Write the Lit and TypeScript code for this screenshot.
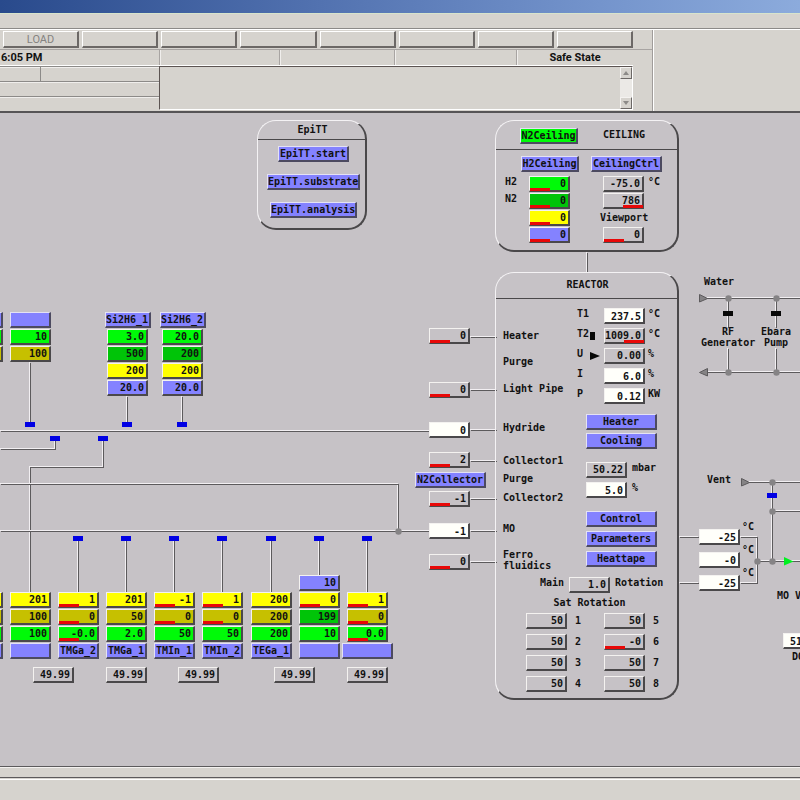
import { LitElement, html, svg, css, nothing } from "lit";
import { customElement, property } from "lit/decorators.js";
import { classMap } from "lit/directives/class-map.js";
import { styleMap } from "lit/directives/style-map.js";

/* Diagram coordinates are screen coordinates; the header takes the first rows. */
const TOP = 113;
const at = (x: number, y: number) => styleMap({ left: `${x}px`, top: `${y - TOP}px` });

type Alarm = "" | "low" | "high";
type Cell = [color: string, value: string, alarm?: Alarm];

interface Column {
  x: number;
  y: number;
  cells: Cell[];
  name: string;
  nameFirst?: boolean;
  wide?: boolean;
}

const upper: Column[] = [
  { x: -38, y: 312, name: "", nameFirst: true, cells: [["green", ""], ["olive", ""]] },
  { x: 10, y: 312, name: "", nameFirst: true, cells: [["green", "10"], ["olive", "100"]] },
  { x: 107, y: 312, name: "Si2H6_1", nameFirst: true, wide: true,
    cells: [["green", "3.0"], ["forest", "500"], ["yellow", "200"], ["violet", "20.0"]] },
  { x: 162, y: 312, name: "Si2H6_2", nameFirst: true, wide: true,
    cells: [["green", "20.0"], ["forest", "200"], ["yellow", "200"], ["violet", "20.0"]] },
];

const lower: Column[] = [
  { x: -38, y: 592, name: "", cells: [["yellow", ""], ["olive", ""], ["green", ""]] },
  { x: 10, y: 592, name: "", cells: [["yellow", "201"], ["olive", "100"], ["green", "100"]] },
  { x: 58, y: 592, name: "TMGa_2", cells: [["yellow", "1", "low"], ["olive", "0", "low"], ["green", "-0.0", "low"]] },
  { x: 106, y: 592, name: "TMGa_1", cells: [["yellow", "201"], ["olive", "50"], ["green", "2.0"]] },
  { x: 154, y: 592, name: "TMIn_1", cells: [["yellow", "-1", "low"], ["olive", "0", "low"], ["green", "50"]] },
  { x: 202, y: 592, name: "TMIn_2", cells: [["yellow", "1", "low"], ["olive", "0", "low"], ["green", "50"]] },
  { x: 251, y: 592, name: "TEGa_1", cells: [["yellow", "200"], ["olive", "200"], ["green", "200"]] },
  { x: 299, y: 575, name: "", cells: [["violet", "10"], ["yellow", "0", "low"], ["forest", "199"], ["green", "10"]] },
  { x: 347, y: 592, name: "", wide: true, cells: [["yellow", "1", "low"], ["olive", "0", "low"], ["green", "0.0", "low"]] },
];

const bathTemps = [33, 106, 178, 274, 347];

/* Gas inlets to the left of the reactor. */
const inlets: { y: number; value: string; alarm?: Alarm; set?: boolean; wire: number }[] = [
  { y: 328, value: "0", alarm: "low", wire: 337 },
  { y: 382, value: "0", alarm: "low", wire: 390 },
  { y: 422, value: "0", set: true, wire: 430 },
  { y: 452, value: "2", alarm: "low", wire: 461 },
  { y: 491, value: "-1", alarm: "low", wire: 499 },
  { y: 523, value: "-1", set: true, wire: 531 },
  { y: 554, value: "0", alarm: "low", wire: 562 },
];

const ports: [text: string, y: number][] = [
  ["Heater", 330],
  ["Purge", 356],
  ["Light Pipe", 383],
  ["Hydride", 422],
  ["Collector1", 455],
  ["Purge", 473],
  ["Collector2", 492],
  ["MO", 523],
  ["Ferro\nfluidics", 549],
];

const labels: [text: string, x: number, y: number][] = [
  ["Water", 704, 276],
  ["RF\nGenerator", 701, 326],
  ["Ebara\nPump", 761, 326],
  ["Vent", 707, 474],
  ["°C", 742, 521],
  ["°C", 742, 544],
  ["°C", 742, 567],
  ["MO V", 777, 590],
  ["DO", 792, 651],
];

const wires = [
  "M0 431H429",
  "M30 362V424",
  "M127 396V424",
  "M182 396V424",
  "M0 449H55V440",
  "M103 440V467H30V592",
  "M0 484H398V531",
  "M0 531H429",
  "M78 540V592",
  "M126 540V592",
  "M174 540V592",
  "M222 540V592",
  "M271 540V592",
  "M319 540V575",
  "M367 540V592",
  "M587 252V272",
  "M706 298H2000",
  "M728 298V327",
  "M776 298V327",
  "M728 348V372",
  "M776 348V372",
  "M706 372H2000",
  "M748 482H2000",
  "M772 482V561",
  "M772 511H2000",
  "M679 537H698",
  "M679 583H698",
  "M740 537H757V583H740",
  "M757 561H2000",
  ...inlets.map((i) => `M470 ${i.wire}H496`),
];

const valves: [x: number, y: number][] = [
  [30, 425], [127, 425], [182, 425], [55, 439], [103, 439],
  [78, 539], [126, 539], [174, 539], [222, 539], [271, 539], [319, 539], [367, 539],
  [772, 496],
];

const joints: [x: number, y: number][] = [
  [398, 531], [728, 298], [776, 298], [728, 372], [776, 372],
  [772, 482], [772, 511], [772, 561], [757, 561],
];

@customElement("value-cell")
class ValueCell extends LitElement {
  @property() value = "";
  @property() color = "plain";
  @property() alarm: Alarm = "";
  @property({ type: Boolean }) editable = false;
  @property() name = "Value";

  static styles = css`
    :host { display: block; width: 41px; height: 16px; position: relative; }
    .cell {
      display: block; box-sizing: border-box; width: 100%; height: 16px; margin: 0;
      padding: 1px 2px 0 0; border: 1px solid; border-radius: 0;
      border-color: #f4f2f0 #4a484a #4a484a #f4f2f0; border-right-width: 2px;
      border-bottom-width: 2px;
      font: bold 10px/12px "DejaVu Sans Mono", "Liberation Mono", monospace;
      color: #111; text-align: right; white-space: nowrap; outline: none;
    }
    .plain { background: #c6c2c6; }
    .white { background: #fffffa; }
    .green { background: #00fa08; }
    .forest { background: #00c408; }
    .yellow { background: #ffff00; }
    .olive { background: #c6c000; }
    .violet { background: #8482ff; }
    .bar { position: absolute; left: 1px; bottom: 1px; width: 20px; height: 3px; background: #e80808; }
    .bar.high { left: auto; right: 1px; }
  `;

  render() {
    const cls = classMap({ cell: true, [this.editable ? "white" : this.color]: true });
    return html`
      ${this.editable
        ? html`<input class=${cls} aria-label=${this.name} .value=${this.value} />`
        : html`<output class=${cls} aria-label=${this.name}>${this.value}</output>`}
      ${this.alarm ? html`<span class=${classMap({ bar: true, high: this.alarm === "high" })}></span>` : nothing}
    `;
  }
}

@customElement("app-root")
class AppRoot extends LitElement {
  static styles = css`
    :host {
      display: flex; flex-direction: column; min-height: 100vh; overflow: hidden;
      background: #d6d3ce; color: #111;
      font: bold 10px/11px "DejaVu Sans Mono", "Liberation Mono", monospace;
    }
    .title { height: 13px; background: linear-gradient(90deg, #294a8c, #5272b0 40%, #7494cc 75%, #8cabdc); }
    .menu { height: 16px; border-top: 1px solid #d8e4cc; border-bottom: 1px solid #8c8a88; box-sizing: border-box; }
    .head { display: flex; height: 84px; border-top: 1px solid #fff; box-sizing: border-box; border-bottom: 2px solid #565456; font: bold 11px/14px Roboto, "Liberation Sans", sans-serif; }
    .left { flex: 1; min-width: 0; border-right: 1px solid #a09c9a; display: flex; flex-direction: column; }
    .side { width: 147px; border-left: 1px solid #fff; box-sizing: border-box; }
    .tools { display: flex; gap: 3px; padding: 1px 19px 1px 3px; height: 20px; box-sizing: border-box; border-bottom: 1px solid #a8a4a2; }
    .tools button {
      flex: 1; min-width: 0; padding: 0; border: 1px solid; border-color: #fff #6c6866 #6c6866 #fff;
      border-right-width: 2px; border-bottom-width: 2px; background: #d6d3ce; color: #848280;
      font: 11px/13px Roboto, "Liberation Sans", sans-serif; height: 17px;
    }
    .status { display: flex; height: 15px; line-height: 15px; margin-right: 19px; border-bottom: 1px solid #fff; }
    .status div { box-sizing: border-box; border-left: 1px solid #a8a4a2; box-shadow: inset 1px 0 #f0eeec; }
    .status .time { width: 159px; padding-left: 1px; border: 0; box-shadow: none; }
    .status .s1 { width: 120px; }
    .status .s2 { width: 115px; }
    .status .s3 { width: 122px; }
    .status .s4 { flex: 1; text-align: center; }
    .log { display: flex; flex: 1; margin-right: 19px; }
    .rows { width: 159px; display: flex; flex-direction: column; }
    .rows div { flex: 1; border-top: 1px solid #8c8a88; box-shadow: inset 0 1px #f0eeec; }
    .rows .split { display: flex; }
    .rows .split span { width: 40px; border-right: 1px solid #8c8a88; }
    .message { flex: 1; display: flex; box-sizing: border-box; height: 44px; border: 1px solid; border-color: #5c5452 #fff #fff #5c5452; }
    .message textarea { flex: 1; border: 0; padding: 0; margin: 0; resize: none; background: #d6d3ce; outline: none; overflow: hidden; }
    .scroll { width: 12px; display: flex; flex-direction: column; justify-content: space-between; background: #ebe9e6; }
    .scroll button { width: 12px; height: 12px; padding: 0; border: 1px solid; border-color: #f4f2f0 #6c6866 #6c6866 #f4f2f0; background: #d6d3ce; display: flex; align-items: center; justify-content: center; }
    .scroll path { fill: #8c8a88; }

    .canvas { position: relative; flex: 1; min-height: 653px; overflow: hidden; background: #c6c2c6; }
    .wiring { position: absolute; inset: 0; width: 100%; height: 100%; }
    .lit { fill: none; stroke: #f2eff2; stroke-width: 1; }
    .dark { fill: none; stroke: #5c5a5c; stroke-width: 1; }
    .joint { fill: #858385; }
    .arrow { fill: #858385; stroke: #5c5a5c; stroke-width: 1; }
    .go { fill: #00f020; }
    .ink { fill: #080808; }
    .valve { fill: #0000e4; }
    .node { position: absolute; }
    .text { position: absolute; white-space: pre; }
    .center { text-align: center; }
    .stack { position: absolute; display: flex; flex-direction: column; align-items: center; width: 41px; gap: 1px; }

    .tag {
      box-sizing: border-box; height: 16px; margin: 0; padding: 0; border: 1px solid;
      border-color: #e4e2f4 #4c4a60 #4c4a60 #e4e2f4; border-right-width: 2px; border-bottom-width: 2px;
      background: #8482ff; color: #111; font: bold 10px/12px "DejaVu Sans Mono", "Liberation Mono", monospace;
      white-space: nowrap; width: 41px; flex: none;
    }
    .tag.on { background: #00fa08; }
    .tag.w46 { width: 46px; }
    .tag.w51 { width: 51px; }
    .tag.w58 { width: 58px; }
    .tag.w70 { width: 71px; }
    .tag.w87 { width: 87px; }
    .tag.w93 { width: 93px; }

    .panel {
      position: absolute; box-sizing: border-box; border: 1px solid; border-radius: 19px;
      border-color: #f4f2f4 #4a484a #4a484a #f4f2f4; border-right-width: 2px; border-bottom-width: 2px;
      width: 184px;
    }
    .panel header { border-bottom: 1px solid #4a484a; display: flex; justify-content: center; box-sizing: border-box; }
    .epi { width: 110px; height: 110px; }
    .epi header { height: 19px; padding: 3px 0 0 2px; }
    .epi .items { display: flex; flex-direction: column; align-items: center; gap: 12px; padding: 6px 0 0 4px; }
    .ceiling { height: 132px; }
    .ceiling header { height: 29px; padding: 7px 0 0 24px; justify-content: flex-start; gap: 25px; line-height: 14px; }
    .ceiling .pair { display: flex; gap: 12px; padding: 6px 0 4px 25px; }
    .ceiling .readings { display: grid; grid-template-columns: 24px 41px 33px 41px 24px; grid-auto-rows: 16px; gap: 1px 0; padding-left: 9px; }
    .ceiling .unit { grid-column: 5; padding-left: 4px; }
    .ceiling .c2 { grid-column: 2; }
    .ceiling .c4 { grid-column: 4; }
    .ceiling .view { grid-column: 3 / 6; padding: 2px 0 0 30px; }
    .reactor { height: 428px; }
    .reactor header { height: 26px; padding: 6px 0 0 2px; }
    .controls { display: flex; flex-direction: column; padding-left: 81px; }
    .heat { display: grid; grid-template-columns: 13px 14px 41px 30px; row-gap: 4px; grid-auto-rows: 16px; padding-top: 9px; }
    .heat .unit { padding-left: 3px; }
    .heat svg { margin-top: 3px; }
    .group { display: flex; flex-direction: column; padding-left: 9px; gap: 4px; }
    .g1 { padding-top: 10px; gap: 3px; }
    .g2 { padding-top: 13px; }
    .g3 { padding-top: 13px; }
    .reading { display: flex; gap: 5px; }
    .rotation { display: flex; gap: 5px; padding: 10px 0 0 44px; }
    .sat { text-align: center; padding: 4px 0 5px 6px; }
    .sats { display: grid; grid-template-columns: 41px 37px 41px 20px; grid-auto-rows: 16px; gap: 5px 0; padding-left: 30px; }
    .sats span { padding: 2px 0 0 8px; }
    footer { height: 34px; box-sizing: border-box; border-top: 1px solid #5c5a5c; }
    footer div { height: 11px; box-sizing: border-box; border-top: 1px solid #f4f2f0; border-bottom: 1px solid #5c5a5c; }
    footer p { margin: 0; height: 2px; border-bottom: 1px solid #fff; box-sizing: border-box; }
  `;

  private tag(text: string, cls = "") {
    return html`<button class="tag ${cls}" aria-label=${text || "Unassigned source"}>${text}</button>`;
  }

  private column(c: Column) {
    const wide = c.wide ? (c.nameFirst ? "w46" : "w51") : "";
    const name = this.tag(c.name, wide);
    return html`<div class="stack" style=${at(c.x, c.y)}>
      ${c.nameFirst ? name : nothing}
      ${c.cells.map(([color, value, alarm]) => html`<value-cell color=${color} value=${value} alarm=${alarm ?? ""}></value-cell>`)}
      ${c.nameFirst ? nothing : name}
    </div>`;
  }

  private wiring() {
    return html`<svg class="wiring" aria-hidden="true">
      <g transform="translate(0 ${-TOP})">
        <g shape-rendering="crispEdges">
          ${wires.map((d) => svg`<path class="lit" transform="translate(-.5 -.5)" d=${d} /><path class="dark" transform="translate(.5 .5)" d=${d} />`)}
          ${valves.map(([x, y]) => svg`<rect class="valve" x=${x - 5} y=${y - 3} width="10" height="5" />`)}
          <rect class="ink" x="723" y="311" width="10" height="5" />
          <rect class="ink" x="771" y="311" width="10" height="5" />
        </g>
        ${joints.map(([x, y]) => svg`<circle class="joint" cx=${x + 0.5} cy=${y + 0.5} r="3.2" />`)}
        <path class="arrow" d="M699.5 294.5V302L707.5 298.5Z" />
        <path class="arrow" d="M707.5 368.5V376L699.5 372.5Z" />
        <path class="arrow" d="M741.5 478.5V486L749.5 482.5Z" />
        <path class="go" d="M784 557V565.5L793.5 561.5Z" />
      </g>
    </svg>`;
  }

  private header() {
    return html`
      <div class="title"></div>
      <div class="menu"></div>
      <div class="head">
        <div class="left">
          <div class="tools">
            <button disabled>LOAD</button>
            ${[1, 2, 3, 4, 5, 6, 7].map((n) => html`<button disabled aria-label="Slot ${n}"></button>`)}
          </div>
          <div class="status">
            <div class="time">6:05 PM</div><div class="s1"></div><div class="s2"></div><div class="s3"></div>
            <div class="s4">Safe State</div>
          </div>
          <div class="log">
            <div class="rows"><div class="split"><span></span></div><div></div><div></div></div>
            <div class="message">
              <textarea readonly aria-label="Messages"></textarea>
              <div class="scroll">
                <button aria-label="Scroll up"><svg width="6" height="4"><path d="M0 4L3 0L6 4Z" /></svg></button>
                <button aria-label="Scroll down"><svg width="6" height="4"><path d="M0 0L3 4L6 0Z" /></svg></button>
              </div>
            </div>
          </div>
        </div>
        <div class="side"></div>
      </div>`;
  }

  private ceiling() {
    return html`<section class="panel ceiling" style=${at(495, 120)}>
      <header>${this.tag("N2Ceiling", "on w58")}<span>CEILING</span></header>
      <div class="pair">${this.tag("H2Ceiling", "w58")}${this.tag("CeilingCtrl", "w70")}</div>
      <div class="readings">
        <span>H2</span><value-cell color="green" value="0" alarm="low"></value-cell>
        <value-cell class="c4" value="-75.0"></value-cell><span class="unit">°C</span>
        <span>N2</span><value-cell color="forest" value="0" alarm="low"></value-cell>
        <value-cell class="c4" value="786" alarm="high"></value-cell>
        <value-cell class="c2" color="yellow" value="0" alarm="low"></value-cell><span class="view">Viewport</span>
        <value-cell class="c2" color="violet" value="0" alarm="low"></value-cell>
        <value-cell class="c4" value="0" alarm="low"></value-cell>
      </div>
    </section>`;
  }

  private reactor() {
    const cell = (value: string, alarm: Alarm = "") => html`<value-cell value=${value} alarm=${alarm}></value-cell>`;
    const input = (value: string, name: string) => html`<value-cell editable value=${value} name=${name}></value-cell>`;
    return html`<section class="panel reactor" style=${at(495, 272)}>
      <header>REACTOR</header>
      <div class="controls">
        <div class="heat">
          <span>T1</span><i></i>${input("237.5", "T1")}<span class="unit">°C</span>
          <span>T2</span><svg width="10" height="10"><path class="ink" d="M0 1H5V9H0Z" /></svg>${cell("1009.0", "high")}<span class="unit">°C</span>
          <span>U</span><svg width="10" height="10"><path class="ink" d="M0 1L10 5L0 9Z" /></svg>${cell("0.00")}<span class="unit">%</span>
          <span>I</span><i></i>${input("6.0", "I")}<span class="unit">%</span>
          <span>P</span><i></i>${input("0.12", "P")}<span class="unit">KW</span>
        </div>
        <div class="group g1">${this.tag("Heater", "w70")}${this.tag("Cooling", "w70")}</div>
        <div class="group g2">
          <div class="reading">${cell("50.22")}<span>mbar</span></div>
          <div class="reading">${input("5.0", "Throttle")}<span>%</span></div>
        </div>
        <div class="group g3">${this.tag("Control", "w70")}${this.tag("Parameters", "w70")}${this.tag("Heattape", "w70")}</div>
      </div>
      <div class="rotation"><span>Main</span>${cell("1.0")}<span>Rotation</span></div>
      <div class="sat">Sat Rotation</div>
      <div class="sats">
        ${[1, 2, 3, 4].map((n) => html`${cell("50")}<span>${n}</span>${n === 2 ? cell("-0", "low") : cell("50")}<span>${n + 4}</span>`)}
      </div>
    </section>`;
  }

  render() {
    return html`
      ${this.header()}
      <main class="canvas">
        ${this.wiring()}
        ${upper.map((c) => this.column(c))}
        ${lower.map((c) => this.column(c))}
        ${bathTemps.map((x) => html`<value-cell class="node" style=${at(x, 667)} value="49.99"></value-cell>`)}
        <section class="panel epi" style=${at(257, 120)}>
          <header>EpiTT</header>
          <div class="items">${this.tag("EpiTT.start", "w70")}${this.tag("EpiTT.substrate", "w93")}${this.tag("EpiTT.analysis", "w87")}</div>
        </section>
        ${this.ceiling()}
        ${this.reactor()}
        ${inlets.map((i) => html`<value-cell class="node" style=${at(429, i.y)} value=${i.value} alarm=${i.alarm ?? ""} ?editable=${i.set}></value-cell>`)}
        <div class="node" style=${at(415, 472)}>${this.tag("N2Collector", "w70")}</div>
        ${ports.map(([t, y]) => html`<div class="text" style=${at(503, y)}>${t}</div>`)}
        ${labels.map(([t, x, y]) => html`<div class="text center" style=${at(x, y)}>${t}</div>`)}
        <value-cell class="node" style=${at(699, 529)} editable value="-25" name="Upper line"></value-cell>
        <value-cell class="node" style=${at(699, 552)} editable value="-0" name="Middle line"></value-cell>
        <value-cell class="node" style=${at(699, 575)} editable value="-25" name="Lower line"></value-cell>
        <value-cell class="node" style=${at(783, 633)} editable value="51.00" name="Outlet"></value-cell>
      </main>
      <footer><div></div><p></p></footer>`;
  }
}
